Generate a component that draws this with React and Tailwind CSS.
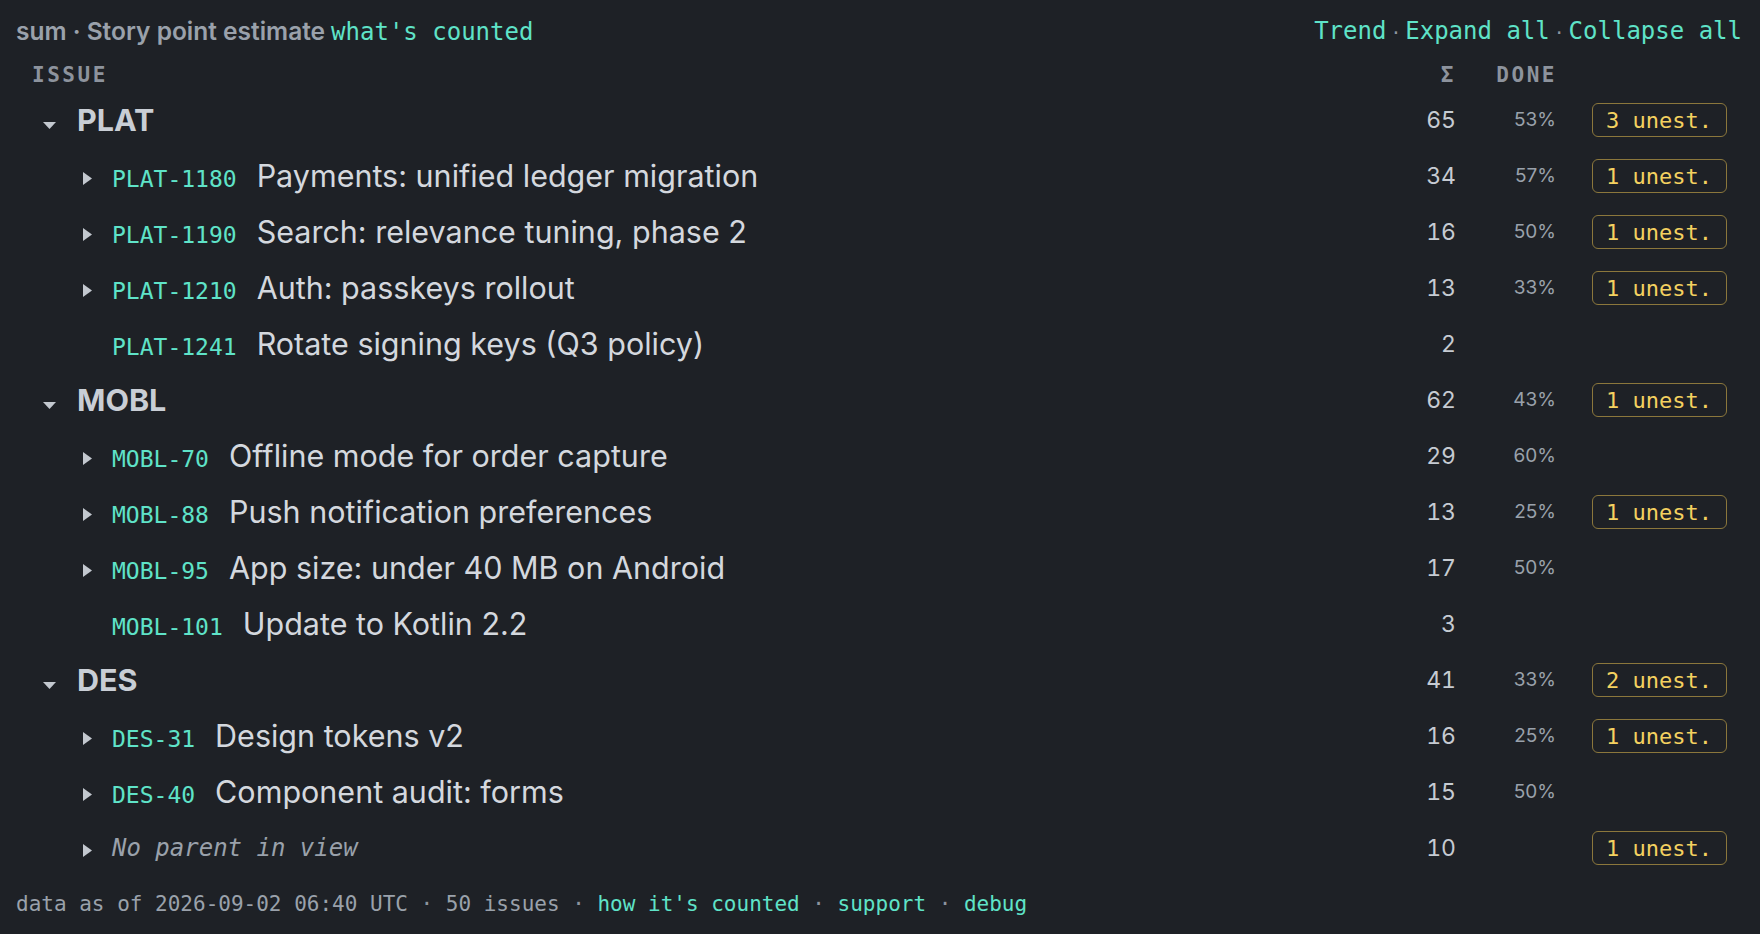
import React from "react";

const MONO = "font-['DejaVu_Sans_Mono','Liberation_Mono',monospace]";
const SANS = "font-['Inter','Liberation_Sans',sans-serif]";

const groups = [
  {
    key: "PLAT",
    sum: 65,
    done: "53%",
    unest: 3,
    children: [
      { id: "PLAT-1180", title: "Payments: unified ledger migration", sum: 34, done: "57%", unest: 1, exp: true },
      { id: "PLAT-1190", title: "Search: relevance tuning, phase 2", sum: 16, done: "50%", unest: 1, exp: true },
      { id: "PLAT-1210", title: "Auth: passkeys rollout", sum: 13, done: "33%", unest: 1, exp: true },
      { id: "PLAT-1241", title: "Rotate signing keys (Q3 policy)", sum: 2, done: "", unest: 0, exp: false },
    ],
  },
  {
    key: "MOBL",
    sum: 62,
    done: "43%",
    unest: 1,
    children: [
      { id: "MOBL-70", title: "Offline mode for order capture", sum: 29, done: "60%", unest: 0, exp: true },
      { id: "MOBL-88", title: "Push notification preferences", sum: 13, done: "25%", unest: 1, exp: true },
      { id: "MOBL-95", title: "App size: under 40 MB on Android", sum: 17, done: "50%", unest: 0, exp: true },
      { id: "MOBL-101", title: "Update to Kotlin 2.2", sum: 3, done: "", unest: 0, exp: false },
    ],
  },
  {
    key: "DES",
    sum: 41,
    done: "33%",
    unest: 2,
    children: [
      { id: "DES-31", title: "Design tokens v2", sum: 16, done: "25%", unest: 1, exp: true },
      { id: "DES-40", title: "Component audit: forms", sum: 15, done: "50%", unest: 0, exp: true },
    ],
  },
];

function DownTri() {
  return (
    <svg width="13" height="7" viewBox="0 0 13 7" className="mt-[10px] shrink-0">
      <polygon points="0,0 13,0 6.5,7" fill="#c3c8cf" />
    </svg>
  );
}

function RightTri({ hidden }) {
  return (
    <svg width="9" height="13" viewBox="0 0 9 13" className={"mt-[5px] shrink-0 " + (hidden ? "invisible" : "")}>
      <polygon points="0,0 9,6.5 0,13" fill="#c3c8cf" />
    </svg>
  );
}

function Badge({ n }) {
  if (!n) return null;
  return (
    <div
      className={`${MONO} flex h-[34px] w-[135px] items-center rounded-[6px] border-[1.5px] border-[#8b773c] pl-[13px] text-[22px] text-[#f4d160]`}
    >
      {n} unest.
    </div>
  );
}

function Cols({ sum, done, unest }) {
  return (
    <>
      <div className={`${SANS} w-[80px] text-right text-[23px] tabular-nums text-[#c6cbd2]`}>{sum}</div>
      <div className={`${SANS} w-[136px] pr-[36px] text-right text-[19px] text-[#9aa1ab]`}>{done}</div>
      <div className="flex w-[150px] items-center">
        <Badge n={unest} />
      </div>
    </>
  );
}

function GroupRow({ g }) {
  return (
    <div className="flex h-[56px] items-center">
      <div className="flex flex-1 items-center pl-[27px]">
        <DownTri />
        <span className={`${SANS} ml-[21px] text-[30.5px] font-bold leading-none text-[#c9ced5]`}>{g.key}</span>
      </div>
      <Cols sum={g.sum} done={g.done} unest={g.unest} />
    </div>
  );
}

function ChildRow({ c }) {
  return (
    <div className="flex h-[56px] items-center">
      <div className="flex flex-1 items-center pl-[67px]">
        <RightTri hidden={!c.exp} />
        <div className="ml-[20px] flex items-baseline">
          <span className={`${MONO} text-[23px] text-[#5fe3c8]`}>{c.id}</span>
          <span className={`${SANS} ml-[20px] text-[30.5px] text-[#d4d8de]`}>{c.title}</span>
        </div>
      </div>
      <Cols sum={c.sum} done={c.done} unest={c.unest} />
    </div>
  );
}

function Sep({ className = "" }) {
  return <span className={`text-[#8d949e] ${className}`}>·</span>;
}

export default function App() {
  return (
    <div className="min-h-screen w-full bg-[#1e2126] pl-[16px] pr-[18px] pt-[12px]">
      <div className="flex h-[38px] items-center justify-between">
        <div className="flex items-baseline">
          <span className={`${SANS} text-[24.5px] font-semibold text-[#9aa1ab]`}>sum · Story point estimate</span>
          <span className={`${MONO} ml-[6px] text-[24px] text-[#5fe3c8]`}>what's counted</span>
        </div>
        <div className={`${MONO} flex items-baseline text-[24px] text-[#5fe3c8]`}>
          <span>Trend</span>
          <Sep className="mx-[4px] text-[18px]" />
          <span>Expand all</span>
          <Sep className="mx-[4px] text-[18px]" />
          <span>Collapse all</span>
        </div>
      </div>

      <div className={`${MONO} mt-[10px] flex h-[32px] items-center text-[21px] font-bold tracking-[0.12em] text-[#8d939d]`}>
        <div className="flex-1 pl-[16px]">ISSUE</div>
        <div className="w-[80px] text-right">Σ</div>
        <div className="w-[136px] pr-[35px] text-right">DONE</div>
        <div className="w-[150px]"></div>
      </div>

      <div>
        {groups.map((g) => (
          <React.Fragment key={g.key}>
            <GroupRow g={g} />
            {g.children.map((c) => (
              <ChildRow key={c.id} c={c} />
            ))}
          </React.Fragment>
        ))}
        <div className="flex h-[56px] items-center">
          <div className="flex flex-1 items-center pl-[67px]">
            <RightTri />
            <span className={`${MONO} ml-[20px] text-[24px] italic leading-none text-[#9aa1ab]`}>No parent in view</span>
          </div>
          <Cols sum={10} done="" unest={1} />
        </div>
      </div>

      <div className={`${MONO} flex h-[58px] items-center whitespace-pre text-[21px] text-[#9aa1ab]`}>
        <span>data as of 2026-09-02 06:40 UTC</span>
        <Sep className="px-[12.6px]" />
        <span>50 issues</span>
        <Sep className="px-[12.6px]" />
        <span className="text-[#5fe3c8]">how it's counted</span>
        <Sep className="px-[12.6px]" />
        <span className="text-[#5fe3c8]">support</span>
        <Sep className="px-[12.6px]" />
        <span className="text-[#5fe3c8]">debug</span>
      </div>
    </div>
  );
}
